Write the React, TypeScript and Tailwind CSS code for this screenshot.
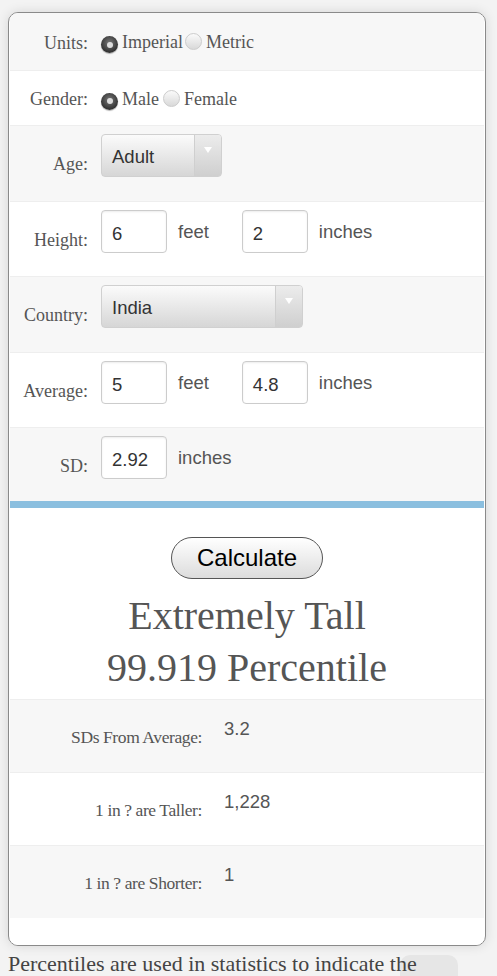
import React from 'react';

const serif = "font-['Liberation_Serif',serif]";
const sans = "font-['Liberation_Sans',Arial,sans-serif]";

function Radio({ checked }: { checked?: boolean }) {
  return checked ? (
    <span className="inline-flex items-center justify-center w-[17px] h-[17px] rounded-full bg-[radial-gradient(circle_at_50%_40%,#777_0%,#333_70%)] shadow-[0_1px_1px_rgba(0,0,0,0.3)] mt-[4px]">
      <span className="w-[6px] h-[6px] rounded-full bg-[#ddd]" />
    </span>
  ) : (
    <span className="inline-block w-[17px] h-[17px] rounded-full border border-[#ccc] bg-[linear-gradient(#fafafa,#d9d9d9)] mt-[4px]" />
  );
}

function RadioRow({ label, gray, h, children }: { label: string; gray?: boolean; h: string; children: React.ReactNode }) {
  return (
    <div className={`flex items-center ${h} border-t border-[#eee] first:border-t-0 ${gray ? 'bg-[#f7f7f7]' : 'bg-white'}`}>
      <div className={`w-[78px] text-right text-[18px] text-[#555] ${serif} pt-[3px]`}>{label}:</div>
      <div className="ml-[13px] flex items-center pt-[2px]">{children}</div>
    </div>
  );
}

function Row({ label, gray, h, children }: { label: string; gray?: boolean; h: string; children: React.ReactNode }) {
  return (
    <div className={`flex items-start ${h} border-t border-[#eee] ${gray ? 'bg-[#f7f7f7]' : 'bg-white'}`}>
      <div className={`w-[78px] text-right text-[18px] leading-[24px] text-[#555] ${serif} pt-[26px]`}>{label}:</div>
      <div className="ml-[13px] pt-[8px] flex items-center">{children}</div>
    </div>
  );
}

function TextBox({ value }: { value: string }) {
  return (
    <div className={`w-[66px] h-[43px] rounded-[4px] border border-[#ccc] bg-white shadow-[inset_0_1px_2px_rgba(0,0,0,0.08)] pl-[10px] pt-[9px] text-[18.5px] text-[#333] ${sans}`}>
      {value}
    </div>
  );
}

function Unit({ text }: { text: string }) {
  return <span className={`ml-[11px] text-[18.5px] text-[#555] ${sans}`}>{text}</span>;
}

function Select({ value, width }: { value: string; width: string }) {
  return (
    <div className={`${width} h-[43px] flex rounded-[4px] border border-[#d0d0d0] bg-[linear-gradient(#fbfbfb,#d6d6d6)] overflow-hidden`}>
      <div className={`flex-1 pl-[10px] pt-[8px] text-[18.5px] text-[#333] ${sans}`}>{value}</div>
      <div className="w-[27px] flex justify-center pt-[12px] bg-[linear-gradient(#ececec,#cfcfcf)] border-l border-[#cfcfcf]">
        <span className="w-0 h-0 border-l-[4px] border-r-[4px] border-t-[6px] border-l-transparent border-r-transparent border-t-white" />
      </div>
    </div>
  );
}

function ResultRow({ label, value, gray }: { label: string; value: string; gray?: boolean }) {
  return (
    <div className={`flex h-[73px] border-t border-[#eee] ${gray ? 'bg-[#f7f7f7]' : 'bg-white'}`}>
      <div className={`w-[192px] text-right text-[17.5px] leading-[24px] text-[#555] tracking-[-0.4px] ${serif} pt-[25px]`}>{label}:</div>
      <div className={`ml-[22px] pt-[15px] text-[18.5px] text-[#555] ${sans}`}>{value}</div>
    </div>
  );
}

export default function App() {
  return (
    <div className="min-h-screen bg-[#f3f3f3] pt-[12px] relative overflow-hidden">
      <div className="mx-[8px] w-[478px] rounded-[10px] border border-[#8a8a8a] bg-white shadow-[0_0_12px_rgba(0,0,0,0.12)] overflow-hidden">
        <div className="mx-[1px]">
          <RadioRow label="Units" gray h="h-[57px]">
            <Radio checked />
            <span className={`ml-[4px] text-[18px] text-[#555] ${serif}`}>Imperial</span>
            <span className="ml-[2px]"><Radio /></span>
            <span className={`ml-[4px] text-[18px] text-[#555] ${serif}`}>Metric</span>
          </RadioRow>
          <RadioRow label="Gender" h="h-[55px]">
            <Radio checked />
            <span className={`ml-[4px] text-[18px] text-[#555] ${serif}`}>Male</span>
            <span className="ml-[4px]"><Radio /></span>
            <span className={`ml-[4px] text-[18px] text-[#555] ${serif}`}>Female</span>
          </RadioRow>
          <Row label="Age" gray h="h-[76px]">
            <Select value="Adult" width="w-[121px]" />
          </Row>
          <Row label="Height" h="h-[75px]">
            <TextBox value="6" />
            <Unit text="feet" />
            <span className="ml-[33px]"><TextBox value="2" /></span>
            <Unit text="inches" />
          </Row>
          <Row label="Country" gray h="h-[76px]">
            <Select value="India" width="w-[202px]" />
          </Row>
          <Row label="Average" h="h-[75px]">
            <TextBox value="5" />
            <Unit text="feet" />
            <span className="ml-[33px]"><TextBox value="4.8" /></span>
            <Unit text="inches" />
          </Row>
          <Row label="SD" gray h="h-[74px]">
            <TextBox value="2.92" />
            <Unit text="inches" />
          </Row>
          <div className="h-[7px] bg-[#8bbfdf]" />
          <div className="bg-white pt-[29px] pb-[4px] flex flex-col items-center">
            <button
              type="button"
              className={`w-[152px] h-[42px] rounded-full border border-[#555] bg-[linear-gradient(#ffffff,#dcdcdc)] text-[24px] text-black ${sans}`}
            >
              Calculate
            </button>
            <div className={`mt-[12px] text-[40px] leading-[50px] text-[#555] ${serif}`}>Extremely Tall</div>
            <div className={`text-[40px] leading-[54px] text-[#555] ${serif}`}>99.919 Percentile</div>
          </div>
          <ResultRow label="SDs From Average" value="3.2" gray />
          <ResultRow label="1 in ? are Taller" value="1,228" />
          <ResultRow label="1 in ? are Shorter" value="1" gray />
          <div className="h-[27px] bg-white" />
        </div>
      </div>
      <div className="absolute left-[400px] top-[955px] w-[58px] h-[40px] rounded-[10px] bg-[#e6e6e6]" />
      <p className={`relative mt-[4px] px-[8px] text-[22px] leading-[28px] text-[#444] whitespace-nowrap ${serif}`}>
        Percentiles are used in statistics to indicate the
      </p>
    </div>
  );
}
